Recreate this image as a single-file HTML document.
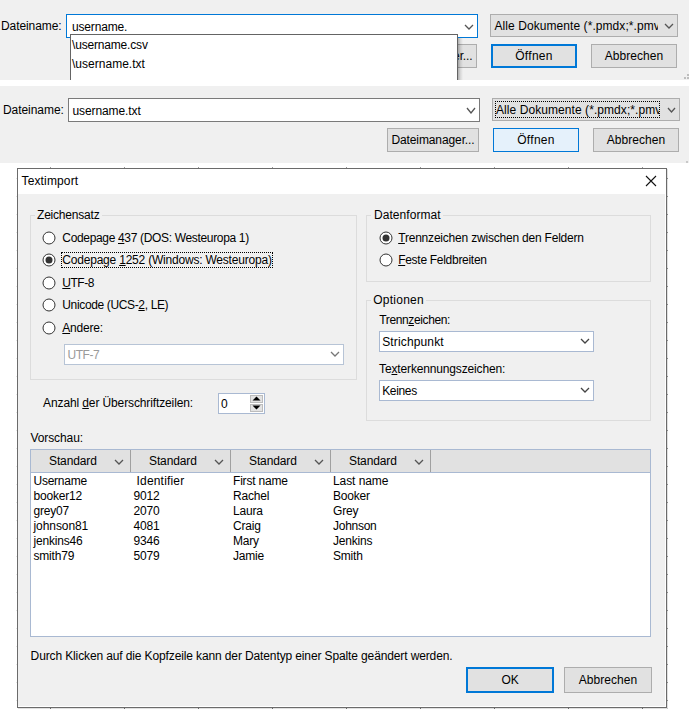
<!DOCTYPE html>
<html><head><meta charset="utf-8"><style>
html,body{margin:0;padding:0;background:#fff;width:689px;height:713px;overflow:hidden;position:relative}
.a{position:absolute}
.t{white-space:nowrap;font-family:"Liberation Sans",sans-serif;color:#000}
u{text-decoration:underline;text-underline-offset:1px}
</style></head><body>
<div class="a" style="left:0px;top:0px;width:689px;height:80px;background:#f0f0f0;"></div>
<div class="a t" style="left:1px;top:19.95px;font-size:12px;line-height:13.788px;color:#000;letter-spacing:-0.089px;">Dateiname:</div>
<div class="a" style="left:66px;top:14px;width:412px;height:24px;background:#fff;border:1px solid #0078d7;box-sizing:border-box;"></div>
<div class="a t" style="left:72px;top:20.95px;font-size:12px;line-height:13.788px;color:#000;letter-spacing:-0.162px;">username.</div>
<svg class="a" style="left:464px;top:24px" width="10" height="6"><polyline points="1,1 5.0,5 9,1" fill="none" stroke="#555" stroke-width="1.3"/></svg>
<div class="a" style="left:385px;top:44px;width:92px;height:24px;background:#e1e1e1;border:1px solid #adadad;box-sizing:border-box;"></div>
<div class="a t" style="left:385px;width:92px;text-align:center;top:50.45px;font-size:12px;line-height:13.788px;letter-spacing:-0.107px;color:#000">Dateimanager...</div>
<div class="a" style="left:490px;top:14px;width:188px;height:23px;background:#e1e1e1;border:1px solid #adadad;box-sizing:border-box;"></div>
<div class="a" style="left:491px;top:15px;width:167px;height:21px;overflow:hidden">
<div class="a t" style="left:3.5px;top:4.95px;font-size:12px;line-height:13.788px;color:#000;letter-spacing:0.069px;">Alle Dokumente (*.pmdx;*.pmvx)</div>
</div>
<svg class="a" style="left:664px;top:23px" width="10" height="6"><polyline points="1,1 5.0,5 9,1" fill="none" stroke="#555" stroke-width="1.3"/></svg>
<div class="a" style="left:491px;top:44px;width:86px;height:24px;background:#e1e1e1;border:2px solid #0078d7;box-sizing:border-box;"></div>
<div class="a t" style="left:491px;width:86px;text-align:center;top:50.45px;font-size:12px;line-height:13.788px;letter-spacing:0.280px;color:#000">&Ouml;ffnen</div>
<div class="a" style="left:591px;top:44px;width:86px;height:24px;background:#e1e1e1;border:1px solid #adadad;box-sizing:border-box;"></div>
<div class="a t" style="left:591px;width:86px;text-align:center;top:50.45px;font-size:12px;line-height:13.788px;letter-spacing:0.062px;color:#000">Abbrechen</div>
<div class="a" style="left:458px;top:38px;width:5px;height:42px;background:linear-gradient(to right,rgba(0,0,0,0.28),rgba(0,0,0,0.10) 50%,rgba(0,0,0,0))"></div>
<div class="a" style="left:70px;top:34px;width:388px;height:46px;background:#fff;border:1px solid #646464;border-bottom:none;box-sizing:border-box"></div>
<div class="a t" style="left:72px;top:39.45px;font-size:12px;line-height:13.788px;color:#000;letter-spacing:-0.175px;">\username.csv</div>
<div class="a t" style="left:72px;top:58.45px;font-size:12px;line-height:13.788px;color:#000;letter-spacing:0.017px;">\username.txt</div>
<div class="a" style="left:687px;top:74px;width:2px;height:2px;background:#bdbdbd;"></div>
<div class="a" style="left:684px;top:77px;width:2px;height:2px;background:#bdbdbd;"></div>
<div class="a" style="left:687px;top:77px;width:2px;height:2px;background:#bdbdbd;"></div>
<div class="a" style="left:0px;top:86px;width:689px;height:77px;background:#f0f0f0;"></div>
<div class="a t" style="left:3px;top:104.45px;font-size:12px;line-height:13.788px;color:#000;letter-spacing:-0.056px;">Dateiname:</div>
<div class="a" style="left:68px;top:98px;width:412px;height:24px;background:#fff;border:1px solid #7a7a7a;box-sizing:border-box;"></div>
<div class="a t" style="left:72.5px;top:104.95px;font-size:12px;line-height:13.788px;color:#000;letter-spacing:-0.100px;">username.txt</div>
<svg class="a" style="left:466px;top:107px" width="10" height="7"><polyline points="1,1 5.0,6 9,1" fill="none" stroke="#555" stroke-width="1.3"/></svg>
<div class="a" style="left:387px;top:128px;width:92px;height:24px;background:#e1e1e1;border:1px solid #adadad;box-sizing:border-box;"></div>
<div class="a t" style="left:387px;width:92px;text-align:center;top:134.45px;font-size:12px;line-height:13.788px;letter-spacing:-0.107px;color:#000">Dateimanager...</div>
<div class="a" style="left:492px;top:98px;width:188px;height:23px;background:#e1e1e1;border:1px solid #adadad;box-sizing:border-box;"></div>
<div class="a" style="left:495px;top:101px;width:165px;height:17px;border:1px dotted #000;box-sizing:border-box;overflow:hidden">
<div class="a t" style="left:0px;top:2.45px;font-size:12px;line-height:13.788px;color:#000;letter-spacing:0.069px;">Alle Dokumente (*.pmdx;*.pmvx)</div>
</div>
<svg class="a" style="left:667px;top:107px" width="9" height="6"><polyline points="1,1 4.5,5 8,1" fill="none" stroke="#555" stroke-width="1.3"/></svg>
<div class="a" style="left:493px;top:128px;width:86px;height:24px;background:#e5f1fb;border:1px solid #0078d7;box-sizing:border-box;"></div>
<div class="a t" style="left:493px;width:86px;text-align:center;top:134.45px;font-size:12px;line-height:13.788px;letter-spacing:0.280px;color:#000">&Ouml;ffnen</div>
<div class="a" style="left:593px;top:128px;width:86px;height:24px;background:#e1e1e1;border:1px solid #adadad;box-sizing:border-box;"></div>
<div class="a t" style="left:593px;width:86px;text-align:center;top:134.45px;font-size:12px;line-height:13.788px;letter-spacing:0.062px;color:#000">Abbrechen</div>
<div class="a" style="left:686px;top:161px;width:2px;height:2px;background:#c8c8c8;"></div>
<div class="a" style="left:17px;top:168px;width:650px;height:540px;background:#f0f0f0;border:1px solid #6b6b6b;box-sizing:border-box;"></div>
<div class="a" style="left:18px;top:169px;width:648px;height:25px;background:#fff;"></div>
<div class="a" style="left:667px;top:169px;width:1px;height:540px;background:rgba(0,0,0,0.12);"></div>
<div class="a" style="left:18px;top:708px;width:650px;height:1px;background:rgba(0,0,0,0.12);"></div>
<div class="a" style="left:665px;top:194px;width:1px;height:513px;background:#fff;"></div>
<div class="a" style="left:18px;top:706px;width:648px;height:1px;background:#fff;"></div>
<div class="a" style="left:667px;top:178px;width:1px;height:1px;background:#8b8b8b;"></div>
<div class="a" style="left:16px;top:178px;width:1px;height:1px;background:#e4e4e4;"></div>
<div class="a" style="left:667px;top:196px;width:1px;height:1px;background:#8b8b8b;"></div>
<div class="a" style="left:16px;top:196px;width:1px;height:1px;background:#e4e4e4;"></div>
<div class="a" style="left:667px;top:214px;width:1px;height:1px;background:#8b8b8b;"></div>
<div class="a" style="left:16px;top:214px;width:1px;height:1px;background:#e4e4e4;"></div>
<div class="a" style="left:667px;top:232px;width:1px;height:1px;background:#8b8b8b;"></div>
<div class="a" style="left:16px;top:232px;width:1px;height:1px;background:#e4e4e4;"></div>
<div class="a" style="left:667px;top:250px;width:1px;height:1px;background:#8b8b8b;"></div>
<div class="a" style="left:16px;top:250px;width:1px;height:1px;background:#e4e4e4;"></div>
<div class="a" style="left:667px;top:268px;width:1px;height:1px;background:#8b8b8b;"></div>
<div class="a" style="left:16px;top:268px;width:1px;height:1px;background:#e4e4e4;"></div>
<div class="a" style="left:667px;top:286px;width:1px;height:1px;background:#8b8b8b;"></div>
<div class="a" style="left:16px;top:286px;width:1px;height:1px;background:#e4e4e4;"></div>
<div class="a" style="left:667px;top:304px;width:1px;height:1px;background:#8b8b8b;"></div>
<div class="a" style="left:16px;top:304px;width:1px;height:1px;background:#e4e4e4;"></div>
<div class="a" style="left:667px;top:322px;width:1px;height:1px;background:#8b8b8b;"></div>
<div class="a" style="left:16px;top:322px;width:1px;height:1px;background:#e4e4e4;"></div>
<div class="a" style="left:667px;top:340px;width:1px;height:1px;background:#8b8b8b;"></div>
<div class="a" style="left:16px;top:340px;width:1px;height:1px;background:#e4e4e4;"></div>
<div class="a" style="left:667px;top:358px;width:1px;height:1px;background:#8b8b8b;"></div>
<div class="a" style="left:16px;top:358px;width:1px;height:1px;background:#e4e4e4;"></div>
<div class="a" style="left:667px;top:376px;width:1px;height:1px;background:#8b8b8b;"></div>
<div class="a" style="left:16px;top:376px;width:1px;height:1px;background:#e4e4e4;"></div>
<div class="a" style="left:667px;top:394px;width:1px;height:1px;background:#8b8b8b;"></div>
<div class="a" style="left:16px;top:394px;width:1px;height:1px;background:#e4e4e4;"></div>
<div class="a" style="left:667px;top:412px;width:1px;height:1px;background:#8b8b8b;"></div>
<div class="a" style="left:16px;top:412px;width:1px;height:1px;background:#e4e4e4;"></div>
<div class="a" style="left:667px;top:430px;width:1px;height:1px;background:#8b8b8b;"></div>
<div class="a" style="left:16px;top:430px;width:1px;height:1px;background:#e4e4e4;"></div>
<div class="a" style="left:667px;top:448px;width:1px;height:1px;background:#8b8b8b;"></div>
<div class="a" style="left:16px;top:448px;width:1px;height:1px;background:#e4e4e4;"></div>
<div class="a" style="left:667px;top:466px;width:1px;height:1px;background:#8b8b8b;"></div>
<div class="a" style="left:16px;top:466px;width:1px;height:1px;background:#e4e4e4;"></div>
<div class="a" style="left:667px;top:484px;width:1px;height:1px;background:#8b8b8b;"></div>
<div class="a" style="left:16px;top:484px;width:1px;height:1px;background:#e4e4e4;"></div>
<div class="a" style="left:667px;top:502px;width:1px;height:1px;background:#8b8b8b;"></div>
<div class="a" style="left:16px;top:502px;width:1px;height:1px;background:#e4e4e4;"></div>
<div class="a" style="left:667px;top:520px;width:1px;height:1px;background:#8b8b8b;"></div>
<div class="a" style="left:16px;top:520px;width:1px;height:1px;background:#e4e4e4;"></div>
<div class="a" style="left:667px;top:538px;width:1px;height:1px;background:#8b8b8b;"></div>
<div class="a" style="left:16px;top:538px;width:1px;height:1px;background:#e4e4e4;"></div>
<div class="a" style="left:667px;top:556px;width:1px;height:1px;background:#8b8b8b;"></div>
<div class="a" style="left:16px;top:556px;width:1px;height:1px;background:#e4e4e4;"></div>
<div class="a" style="left:667px;top:574px;width:1px;height:1px;background:#8b8b8b;"></div>
<div class="a" style="left:16px;top:574px;width:1px;height:1px;background:#e4e4e4;"></div>
<div class="a" style="left:667px;top:592px;width:1px;height:1px;background:#8b8b8b;"></div>
<div class="a" style="left:16px;top:592px;width:1px;height:1px;background:#e4e4e4;"></div>
<div class="a" style="left:667px;top:610px;width:1px;height:1px;background:#8b8b8b;"></div>
<div class="a" style="left:16px;top:610px;width:1px;height:1px;background:#e4e4e4;"></div>
<div class="a" style="left:667px;top:628px;width:1px;height:1px;background:#8b8b8b;"></div>
<div class="a" style="left:16px;top:628px;width:1px;height:1px;background:#e4e4e4;"></div>
<div class="a" style="left:667px;top:646px;width:1px;height:1px;background:#8b8b8b;"></div>
<div class="a" style="left:16px;top:646px;width:1px;height:1px;background:#e4e4e4;"></div>
<div class="a" style="left:667px;top:664px;width:1px;height:1px;background:#8b8b8b;"></div>
<div class="a" style="left:16px;top:664px;width:1px;height:1px;background:#e4e4e4;"></div>
<div class="a" style="left:667px;top:682px;width:1px;height:1px;background:#8b8b8b;"></div>
<div class="a" style="left:16px;top:682px;width:1px;height:1px;background:#e4e4e4;"></div>
<div class="a" style="left:667px;top:700px;width:1px;height:1px;background:#8b8b8b;"></div>
<div class="a" style="left:16px;top:700px;width:1px;height:1px;background:#e4e4e4;"></div>
<div class="a" style="left:50px;top:708px;width:1px;height:1px;background:#6b6b6b;"></div>
<div class="a" style="left:50px;top:167px;width:1px;height:1px;background:#9b9b9b;"></div>
<div class="a" style="left:124px;top:708px;width:1px;height:1px;background:#6b6b6b;"></div>
<div class="a" style="left:124px;top:167px;width:1px;height:1px;background:#9b9b9b;"></div>
<div class="a" style="left:198px;top:708px;width:1px;height:1px;background:#6b6b6b;"></div>
<div class="a" style="left:198px;top:167px;width:1px;height:1px;background:#9b9b9b;"></div>
<div class="a" style="left:272px;top:708px;width:1px;height:1px;background:#6b6b6b;"></div>
<div class="a" style="left:272px;top:167px;width:1px;height:1px;background:#9b9b9b;"></div>
<div class="a" style="left:346px;top:708px;width:1px;height:1px;background:#6b6b6b;"></div>
<div class="a" style="left:346px;top:167px;width:1px;height:1px;background:#9b9b9b;"></div>
<div class="a" style="left:420px;top:708px;width:1px;height:1px;background:#6b6b6b;"></div>
<div class="a" style="left:420px;top:167px;width:1px;height:1px;background:#9b9b9b;"></div>
<div class="a" style="left:494px;top:708px;width:1px;height:1px;background:#6b6b6b;"></div>
<div class="a" style="left:494px;top:167px;width:1px;height:1px;background:#9b9b9b;"></div>
<div class="a" style="left:568px;top:708px;width:1px;height:1px;background:#6b6b6b;"></div>
<div class="a" style="left:568px;top:167px;width:1px;height:1px;background:#9b9b9b;"></div>
<div class="a" style="left:642px;top:708px;width:1px;height:1px;background:#6b6b6b;"></div>
<div class="a" style="left:642px;top:167px;width:1px;height:1px;background:#9b9b9b;"></div>
<div class="a t" style="left:21.5px;top:174.95px;font-size:12px;line-height:13.788px;color:#000;letter-spacing:0.144px;">Textimport</div>
<svg class="a" style="left:645px;top:175px" width="12" height="12"><path d="M1,1 L11,11 M11,1 L1,11" stroke="#111" stroke-width="1.1"/></svg>
<div class="a" style="left:30px;top:215px;width:327px;height:165px;border:1px solid #dcdcdc;box-sizing:border-box;"></div>
<div class="a" style="left:35px;top:210px;width:67px;height:11px;background:#f0f0f0;"></div>
<div class="a t" style="left:37px;top:209.45px;font-size:12px;line-height:13.788px;color:#000;letter-spacing:-0.200px;">Zeichensatz</div>
<svg class="a" style="left:41px;top:229.5px" width="16" height="16"><circle cx="8" cy="8" r="6" fill="#fff" stroke="#333" stroke-width="1"/></svg>
<div class="a t" style="left:62.3px;top:232.45px;font-size:12px;line-height:13.788px;color:#000;letter-spacing:-0.335px;">Codepage <u>4</u>37 (DOS: Westeuropa 1)</div>
<svg class="a" style="left:41px;top:251.5px" width="16" height="16"><circle cx="8" cy="8" r="6" fill="#fff" stroke="#333" stroke-width="1"/><circle cx="8" cy="8" r="3.5" fill="#333"/></svg>
<div class="a t" style="left:62.3px;top:254.45px;font-size:12px;line-height:13.788px;color:#000;letter-spacing:-0.206px;">Codepage <u>1</u>252 (Windows: Westeuropa)</div>
<svg class="a" style="left:41px;top:274.5px" width="16" height="16"><circle cx="8" cy="8" r="6" fill="#fff" stroke="#333" stroke-width="1"/></svg>
<div class="a t" style="left:62.3px;top:277.45px;font-size:12px;line-height:13.788px;color:#000;letter-spacing:-0.500px;"><u>U</u>TF-8</div>
<svg class="a" style="left:41px;top:296.5px" width="16" height="16"><circle cx="8" cy="8" r="6" fill="#fff" stroke="#333" stroke-width="1"/></svg>
<div class="a t" style="left:62.3px;top:299.45px;font-size:12px;line-height:13.788px;color:#000;letter-spacing:-0.356px;">Unicode (UCS-<u>2</u>, LE)</div>
<svg class="a" style="left:41px;top:319.5px" width="16" height="16"><circle cx="8" cy="8" r="6" fill="#fff" stroke="#333" stroke-width="1"/></svg>
<div class="a t" style="left:62.3px;top:322.45px;font-size:12px;line-height:13.788px;color:#000;letter-spacing:-0.200px;"><u>A</u>ndere:</div>
<div class="a" style="left:61px;top:252px;width:212px;height:16px;border:1px dotted #000;box-sizing:border-box"></div>
<div class="a" style="left:64px;top:344px;width:280px;height:21px;background:#fff;border:1px solid #b7c4d6;box-sizing:border-box;"></div>
<div class="a t" style="left:67.5px;top:348.95px;font-size:12px;line-height:13.788px;color:#9a9a9a;letter-spacing:-0.450px;">UTF-7</div>
<svg class="a" style="left:330px;top:351px" width="10" height="6"><polyline points="1,1 5.0,5 9,1" fill="none" stroke="#777" stroke-width="1.3"/></svg>
<div class="a" style="left:366px;top:215px;width:285px;height:67px;border:1px solid #dcdcdc;box-sizing:border-box;"></div>
<div class="a" style="left:371px;top:210px;width:72px;height:11px;background:#f0f0f0;"></div>
<div class="a t" style="left:374px;top:208.95px;font-size:12px;line-height:13.788px;color:#000;letter-spacing:0.060px;">Datenformat</div>
<svg class="a" style="left:377.5px;top:229.5px" width="16" height="16"><circle cx="8" cy="8" r="6" fill="#fff" stroke="#333" stroke-width="1"/><circle cx="8" cy="8" r="3.5" fill="#333"/></svg>
<div class="a t" style="left:398.2px;top:232.45px;font-size:12px;line-height:13.788px;color:#000;letter-spacing:-0.203px;"><u>T</u>rennzeichen zwischen den Feldern</div>
<svg class="a" style="left:377.5px;top:251.5px" width="16" height="16"><circle cx="8" cy="8" r="6" fill="#fff" stroke="#333" stroke-width="1"/></svg>
<div class="a t" style="left:398.2px;top:254.45px;font-size:12px;line-height:13.788px;color:#000;letter-spacing:-0.287px;"><u>F</u>este Feldbreiten</div>
<div class="a" style="left:366px;top:300px;width:285px;height:121px;border:1px solid #dcdcdc;box-sizing:border-box;"></div>
<div class="a" style="left:371px;top:295px;width:55px;height:11px;background:#f0f0f0;"></div>
<div class="a t" style="left:373.2px;top:294.45px;font-size:12px;line-height:13.788px;color:#000;letter-spacing:0.257px;">Optionen</div>
<div class="a t" style="left:379.3px;top:313.95px;font-size:12px;line-height:13.788px;color:#000;letter-spacing:-0.375px;">Trenn<u>z</u>eichen:</div>
<div class="a" style="left:379px;top:331px;width:215px;height:21px;background:#fff;border:1px solid #a9b9d2;box-sizing:border-box;"></div>
<div class="a t" style="left:382.2px;top:336.45px;font-size:12px;line-height:13.788px;color:#000;letter-spacing:0.140px;">Strichpunkt</div>
<svg class="a" style="left:580px;top:338px" width="10" height="6"><polyline points="1,1 5.0,5 9,1" fill="none" stroke="#444" stroke-width="1.3"/></svg>
<div class="a t" style="left:379.1px;top:363.45px;font-size:12px;line-height:13.788px;color:#000;letter-spacing:-0.152px;">Te<u>x</u>terkennungszeichen:</div>
<div class="a" style="left:379px;top:380px;width:215px;height:21px;background:#fff;border:1px solid #a9b9d2;box-sizing:border-box;"></div>
<div class="a t" style="left:382.2px;top:385.45px;font-size:12px;line-height:13.788px;color:#000;letter-spacing:-0.340px;">Keines</div>
<svg class="a" style="left:580px;top:387px" width="10" height="6"><polyline points="1,1 5.0,5 9,1" fill="none" stroke="#444" stroke-width="1.3"/></svg>
<div class="a t" style="left:43.1px;top:397.45px;font-size:12px;line-height:13.788px;color:#000;letter-spacing:-0.121px;">Anzahl <u>d</u>er &Uuml;berschriftzeilen:</div>
<div class="a" style="left:218px;top:393px;width:47px;height:21px;background:#fff;border:1px solid #a9b9d2;box-sizing:border-box;"></div>
<div class="a t" style="left:221px;top:397.95px;font-size:12px;line-height:13.788px;color:#000;letter-spacing:-0.100px;">0</div>
<div class="a" style="left:250px;top:395px;width:13px;height:8px;background:#e3e3e3;border:1px solid #bcbcbc;box-sizing:border-box;"></div>
<div class="a" style="left:250px;top:404px;width:13px;height:8px;background:#e3e3e3;border:1px solid #bcbcbc;box-sizing:border-box;"></div>
<svg class="a" style="left:250px;top:395px" width="13" height="17"><path d="M2.5,5.5 L6.5,1.5 L10.5,5.5 Z M2.5,10.5 L6.5,14.5 L10.5,10.5 Z" fill="#000"/></svg>
<div class="a t" style="left:30.5px;top:431.95px;font-size:12px;line-height:13.788px;color:#000;letter-spacing:-0.100px;">Vorschau:</div>
<div class="a" style="left:30px;top:449px;width:621px;height:188px;background:#fff;border:1px solid #a9b9d2;box-sizing:border-box;"></div>
<div class="a" style="left:31px;top:450px;width:619px;height:22px;background:#e1e1e1;"></div>
<div class="a" style="left:31px;top:472px;width:619px;height:1px;background:#a9b9d2;"></div>
<div class="a" style="left:130px;top:450px;width:1px;height:22px;background:#a0a0a0;"></div>
<div class="a" style="left:230px;top:450px;width:1px;height:22px;background:#a0a0a0;"></div>
<div class="a" style="left:330px;top:450px;width:1px;height:22px;background:#a0a0a0;"></div>
<div class="a" style="left:430px;top:450px;width:1px;height:22px;background:#a0a0a0;"></div>
<div class="a t" style="left:49px;top:454.95px;font-size:12px;line-height:13.788px;color:#000;letter-spacing:-0.114px;">Standard</div>
<svg class="a" style="left:114px;top:458.5px" width="10" height="6.0"><polyline points="1,1 5.0,5.0 9,1" fill="none" stroke="#555" stroke-width="1.3"/></svg>
<div class="a t" style="left:149px;top:454.95px;font-size:12px;line-height:13.788px;color:#000;letter-spacing:-0.114px;">Standard</div>
<svg class="a" style="left:214px;top:458.5px" width="10" height="6.0"><polyline points="1,1 5.0,5.0 9,1" fill="none" stroke="#555" stroke-width="1.3"/></svg>
<div class="a t" style="left:249px;top:454.95px;font-size:12px;line-height:13.788px;color:#000;letter-spacing:-0.114px;">Standard</div>
<svg class="a" style="left:314px;top:458.5px" width="10" height="6.0"><polyline points="1,1 5.0,5.0 9,1" fill="none" stroke="#555" stroke-width="1.3"/></svg>
<div class="a t" style="left:349px;top:454.95px;font-size:12px;line-height:13.788px;color:#000;letter-spacing:-0.114px;">Standard</div>
<svg class="a" style="left:414px;top:458.5px" width="10" height="6.0"><polyline points="1,1 5.0,5.0 9,1" fill="none" stroke="#555" stroke-width="1.3"/></svg>
<div class="a t" style="left:33.5px;top:475.45px;font-size:12px;line-height:13.788px;color:#000;letter-spacing:-0.257px;">Username</div>
<div class="a t" style="left:136.5px;top:475.45px;font-size:12px;line-height:13.788px;color:#000;letter-spacing:0.189px;">Identifier</div>
<div class="a t" style="left:233px;top:475.45px;font-size:12px;line-height:13.788px;color:#000;letter-spacing:-0.200px;">First name</div>
<div class="a t" style="left:333px;top:475.45px;font-size:12px;line-height:13.788px;color:#000;letter-spacing:-0.075px;">Last name</div>
<div class="a t" style="left:33.5px;top:490.45px;font-size:12px;line-height:13.788px;color:#000;letter-spacing:-0.200px;">booker12</div>
<div class="a t" style="left:133.5px;top:490.45px;font-size:12px;line-height:13.788px;color:#000;letter-spacing:-0.200px;">9012</div>
<div class="a t" style="left:233px;top:490.45px;font-size:12px;line-height:13.788px;color:#000;letter-spacing:-0.200px;">Rachel</div>
<div class="a t" style="left:333px;top:490.45px;font-size:12px;line-height:13.788px;color:#000;letter-spacing:-0.200px;">Booker</div>
<div class="a t" style="left:33.5px;top:505.45px;font-size:12px;line-height:13.788px;color:#000;letter-spacing:-0.200px;">grey07</div>
<div class="a t" style="left:133.5px;top:505.45px;font-size:12px;line-height:13.788px;color:#000;letter-spacing:-0.200px;">2070</div>
<div class="a t" style="left:233px;top:505.45px;font-size:12px;line-height:13.788px;color:#000;letter-spacing:-0.200px;">Laura</div>
<div class="a t" style="left:333px;top:505.45px;font-size:12px;line-height:13.788px;color:#000;letter-spacing:-0.200px;">Grey</div>
<div class="a t" style="left:33.5px;top:520.45px;font-size:12px;line-height:13.788px;color:#000;letter-spacing:-0.075px;">johnson81</div>
<div class="a t" style="left:133.5px;top:520.45px;font-size:12px;line-height:13.788px;color:#000;letter-spacing:-0.200px;">4081</div>
<div class="a t" style="left:233px;top:520.45px;font-size:12px;line-height:13.788px;color:#000;letter-spacing:-0.200px;">Craig</div>
<div class="a t" style="left:333px;top:520.45px;font-size:12px;line-height:13.788px;color:#000;letter-spacing:-0.267px;">Johnson</div>
<div class="a t" style="left:33.5px;top:535.45px;font-size:12px;line-height:13.788px;color:#000;letter-spacing:-0.200px;">jenkins46</div>
<div class="a t" style="left:133.5px;top:535.45px;font-size:12px;line-height:13.788px;color:#000;letter-spacing:-0.200px;">9346</div>
<div class="a t" style="left:233px;top:535.45px;font-size:12px;line-height:13.788px;color:#000;letter-spacing:-0.200px;">Mary</div>
<div class="a t" style="left:333px;top:535.45px;font-size:12px;line-height:13.788px;color:#000;letter-spacing:-0.200px;">Jenkins</div>
<div class="a t" style="left:33.5px;top:550.45px;font-size:12px;line-height:13.788px;color:#000;letter-spacing:-0.200px;">smith79</div>
<div class="a t" style="left:133.5px;top:550.45px;font-size:12px;line-height:13.788px;color:#000;letter-spacing:-0.200px;">5079</div>
<div class="a t" style="left:233px;top:550.45px;font-size:12px;line-height:13.788px;color:#000;letter-spacing:-0.200px;">Jamie</div>
<div class="a t" style="left:333px;top:550.45px;font-size:12px;line-height:13.788px;color:#000;letter-spacing:-0.200px;">Smith</div>
<div class="a t" style="left:30.6px;top:650.45px;font-size:12px;line-height:13.788px;color:#000;letter-spacing:-0.123px;">Durch Klicken auf die Kopfzeile kann der Datentyp einer Spalte ge&auml;ndert werden.</div>
<div class="a" style="left:466px;top:667px;width:88px;height:26px;background:#e1e1e1;border:2px solid #0078d7;box-sizing:border-box;"></div>
<div class="a t" style="left:466px;width:88px;text-align:center;top:674.45px;font-size:12px;line-height:13.788px;letter-spacing:-0.100px;color:#000">OK</div>
<div class="a" style="left:564px;top:667px;width:88px;height:26px;background:#e1e1e1;border:1px solid #adadad;box-sizing:border-box;"></div>
<div class="a t" style="left:564px;width:88px;text-align:center;top:674.45px;font-size:12px;line-height:13.788px;letter-spacing:0.062px;color:#000">Abbrechen</div>
</body></html>
